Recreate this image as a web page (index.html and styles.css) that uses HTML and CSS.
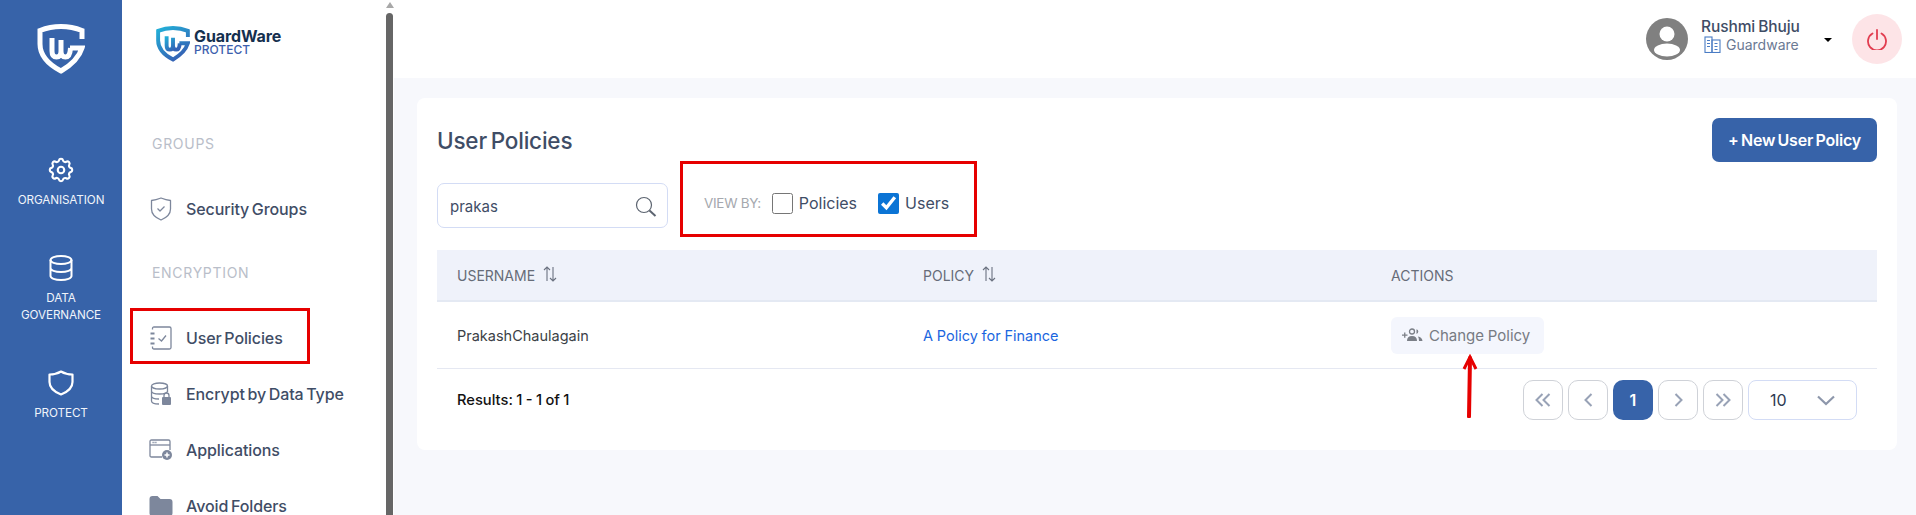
FILE: index.html
```html
<!DOCTYPE html>
<html lang="en">
<head>
<meta charset="utf-8">
<title>User Policies</title>
<link rel="stylesheet" href="styles.css">
</head>
<body>
<svg class="defs" width="0" height="0" aria-hidden="true">
  <defs>
    <linearGradient id="logoGrad" x1="0" y1="0" x2="0.6" y2="1">
      <stop offset="0" stop-color="#22b0d8"/>
      <stop offset="1" stop-color="#3563b5"/>
    </linearGradient>
  </defs>
</svg>
<div class="app">
  <nav class="rail">
    <div class="rail-logo">
      <svg width="48" height="50" viewBox="0 0 48 50" fill="none" stroke="#fff" stroke-width="5">
        <path d="M45 15V6.5Q35 2.5 24 2.5Q13 2.500 3 6.500V20Q3 36 24 47Q41 37 45 24H33"/>
        <path d="M15 14V27Q15 33 19.500 33Q24 33 24 27V16M24 27Q24 33 28.500 33Q33 33 33.500 24"/>
      </svg>
    </div>
    <a class="rail-item rail-org">
      <svg width="30" height="30" viewBox="0 0 24 24" fill="none" stroke="#fff" stroke-width="1.700" stroke-linejoin="round"><path d="M10.325 4.317c.426-1.756 2.924-1.756 3.35 0a1.724 1.724 0 002.573 1.066c1.543-.94 3.31.826 2.37 2.37a1.724 1.724 0 001.065 2.572c1.756.426 1.756 2.924 0 3.35a1.724 1.724 0 00-1.066 2.573c.94 1.543-.826 3.31-2.37 2.37a1.724 1.724 0 00-2.572 1.065c-.426 1.756-2.924 1.756-3.35 0a1.724 1.724 0 00-2.573-1.066c-1.543.94-3.31-.826-2.37-2.37a1.724 1.724 0 00-1.065-2.572c-1.756-.426-1.756-2.924 0-3.35a1.724 1.724 0 001.066-2.573c-.94-1.543.826-3.31 2.37-2.37.996.608 2.296.07 2.572-1.065z"/><circle cx="12" cy="12" r="2.600"/></svg>
      <span>ORGANISATION</span>
    </a>
    <a class="rail-item rail-data">
      <svg width="24" height="26" viewBox="0 0 24 26" fill="none" stroke="#fff" stroke-width="2"><ellipse cx="12" cy="5" rx="10.500" ry="4"/><path d="M1.500 5V21C1.500 23.200 6 25 12 25S22.500 23.200 22.500 21V5M1.500 13C1.500 15.200 6 17 12 17S22.500 15.200 22.500 13"/></svg>
      <span>DATA<br>GOVERNANCE</span>
    </a>
    <a class="rail-item rail-protect">
      <svg width="26" height="26" viewBox="0 0 26 26" fill="none" stroke="#fff" stroke-width="2.200" stroke-linejoin="round"><path d="M13 1.500Q18 4.500 24.500 4.500V12Q24.500 20 13 24.500Q1.500 20 1.500 12V4.500Q8 4.500 13 1.500Z"/></svg>
      <span>PROTECT</span>
    </a>
  </nav>

  <aside class="sidebar">
    <div class="side-content">
      <div class="brand">
        <svg width="34" height="36" viewBox="0 0 48 50" fill="none" stroke="url(#logoGrad)" stroke-width="5.500">
          <path d="M45 15V6.500Q35 2.500 24 2.500Q13 2.500 3 6.500V20Q3 36 24 47Q41 37 45 24H33"/>
          <path d="M15 14V27Q15 33 19.500 33Q24 33 24 27V16M24 27Q24 33 28.500 33Q33 33 33.500 24"/>
        </svg>
        <div class="brand-text">
          <div class="brand-name">GuardWare</div>
          <div class="brand-sub">PROTECT</div>
        </div>
      </div>
      <div class="side-heading side-heading-first">GROUPS</div>
      <a class="side-item">
        <svg class="side-icon" width="22" height="24" viewBox="0 0 22 24" fill="none" stroke="#7d879c" stroke-width="1.300" stroke-linejoin="round"><path d="M11 1Q16 3 20.500 3.500V12Q20.500 19 11 23Q1.500 19 1.500 12V3.500Q6 3 11 1Z"/><path d="M7.500 11.500L10 14L14.500 9.500"/></svg>
        <span>Security Groups</span>
      </a>
      <div class="side-heading side-heading-enc">ENCRYPTION</div>
      <a class="side-item">
        <svg class="side-icon" width="23" height="24" viewBox="0 0 23 24" fill="none" stroke="#7d879c" stroke-width="1.300"><path d="M3 3.500V2.500Q3 1 4.500 1H20Q21.500 1 21.500 2.500V21.500Q21.500 23 20 23H4.500Q3 23 3 21.500V20.500"/><path d="M9 12.500L12 15L16.500 9.500"/><path d="M1 7.500H5M1 12.500H5M1 17.500H5" stroke-width="2"/></svg>
        <span>User Policies</span>
      </a>
      <a class="side-item">
        <svg class="side-icon" width="22" height="24" viewBox="0 0 22 24" fill="none" stroke="#7d879c" stroke-width="1.300"><ellipse cx="9.500" cy="4" rx="8" ry="3"/><path d="M1.500 4V19C1.500 20.700 4.500 22 9 22M17.500 4V10M1.500 9C1.500 10.700 5 12 9.500 12S17.500 10.700 17.500 9M1.500 14C1.500 15.700 4.500 17 9 17"/><rect x="12" y="15" width="9" height="8" rx="1" fill="#7d879c" stroke="none"/><path d="M14 15.500V13.500A2.500 2.500 0 0119 13.500V15.500"/></svg>
        <span>Encrypt by Data Type</span>
      </a>
      <a class="side-item">
        <svg class="side-icon" width="24" height="22" viewBox="0 0 24 22" fill="none" stroke="#7d879c" stroke-width="1.300"><path d="M13 18H2.500Q1 18 1 16.500V2.500Q1 1 2.500 1H19.500Q21 1 21 2.500V11"/><path d="M1 6H21"/><path d="M3.500 3.500H8" stroke-dasharray="1.200 .8"/><circle cx="18" cy="16" r="5" fill="#7d879c" stroke="none"/><path d="M18 13.500V18.500M15.500 16H20.500" stroke="#fff" stroke-width="1.500"/></svg>
        <span>Applications</span>
      </a>
      <a class="side-item">
        <svg class="side-icon" width="23" height="20" viewBox="0 0 23 20" fill="#7d879c"><path d="M0 3Q0 0 3 0H8L11 3H20Q23 3 23 6V17Q23 20 20 20H3Q0 20 0 17Z"/></svg>
        <span>Avoid Folders</span>
      </a>
    </div>
    <div class="scrollbar">
      <span class="scroll-arrow"></span>
      <span class="scroll-thumb"></span>
    </div>
  </aside>

  <div class="main">
    <header class="topbar">
      <svg class="avatar" width="42" height="42" viewBox="0 0 42 42"><circle cx="21" cy="21" r="21" fill="#808080"/><circle cx="21" cy="16" r="7.500" fill="#fff"/><ellipse cx="21" cy="32" rx="13" ry="6.500" fill="#fff"/></svg>
      <div class="user">
        <div class="user-name">Rushmi Bhuju</div>
        <div class="user-org">
          <svg width="17" height="17" viewBox="0 0 17 17" fill="none" stroke="#4a7cc4" stroke-width="1.100"><rect x="1" y="1" width="7" height="15.500"/><rect x="8" y="4" width="8" height="12.500"/><path d="M3 4.500H6M3 7.500H6M3 10.500H6M10.500 7.500H13.500M10.500 10.500H13.500M10.500 13.500H13.500"/></svg>
          <span>Guardware</span>
        </div>
      </div>
      <span class="caret"></span>
      <button class="power" type="button" aria-label="Log out">
        <svg width="20" height="21" viewBox="0 0 20 21" fill="none" stroke="#e23d50" stroke-width="1.800" stroke-linecap="round"><path d="M10 1V10"/><path d="M5.500 4.500A9 9 0 1014.500 4.500"/></svg>
      </button>
    </header>

    <section class="content">
      <div class="card">
        <div class="card-head">
          <h1>User Policies</h1>
          <button class="primary" type="button">+ New User Policy</button>
        </div>
        <div class="toolbar">
          <div class="search">
            <span>prakas</span>
            <svg width="22" height="22" viewBox="0 0 22 22" fill="none" stroke="#5c6470" stroke-width="1.200"><circle cx="9" cy="9" r="7.500"/><path d="M14.500 14.500L20.500 20" stroke-width="2"/></svg>
          </div>
          <div class="viewby">
            <span class="viewby-label">VIEW BY:</span>
            <label class="check"><input type="checkbox"><span>Policies</span></label>
            <label class="check"><input type="checkbox" checked><span>Users</span></label>
          </div>
        </div>
        <div class="table">
          <div class="row row-head">
            <div class="cell">USERNAME <svg class="sort" width="14" height="16" viewBox="0 0 14 16" fill="none" stroke="#6b7280" stroke-width="1.100"><path d="M4 15V1M1 4L4 1L7 4M10 1V15M7 12L10 15L13 12"/></svg></div>
            <div class="cell">POLICY <svg class="sort" width="14" height="16" viewBox="0 0 14 16" fill="none" stroke="#6b7280" stroke-width="1.100"><path d="M4 15V1M1 4L4 1L7 4M10 1V15M7 12L10 15L13 12"/></svg></div>
            <div class="cell">ACTIONS</div>
          </div>
          <div class="row row-body">
            <div class="cell">PrakashChaulagain</div>
            <div class="cell"><a class="link">A Policy for Finance</a></div>
            <div class="cell">
              <button class="change" type="button">
                <svg width="21" height="14" viewBox="0 0 21 14" fill="#7b7f87"><path d="M0 6.500H5.500V7.800H0ZM2.100 4.500H3.400V9.800H2.100Z"/><circle cx="10" cy="3.500" r="2.500" fill="none" stroke="#7b7f87" stroke-width="1.300"/><path d="M5 13Q5 8 10 8T15 13Z"/><path d="M14.500 1.200A2.500 2.500 0 0114.500 6ZM16 8.500Q20 9 20.500 13H17Q17 10 16 8.500Z"/></svg>
                <span>Change Policy</span>
              </button>
            </div>
          </div>
        </div>
        <div class="foot">
          <div class="results">Results: 1 - 1 of 1</div>
          <div class="pager">
            <button class="page" type="button" aria-label="First"><svg width="16" height="14" viewBox="0 0 16 14" fill="none" stroke="#98a2b6" stroke-width="2"><path d="M7.500 1L1.500 7L7.500 13M14.500 1L8.500 7L14.500 13"/></svg></button>
            <button class="page" type="button" aria-label="Previous"><svg width="9" height="14" viewBox="0 0 9 14" fill="none" stroke="#98a2b6" stroke-width="2"><path d="M7.500 1L1.500 7L7.500 13"/></svg></button>
            <button class="page page-on" type="button">1</button>
            <button class="page" type="button" aria-label="Next"><svg width="9" height="14" viewBox="0 0 9 14" fill="none" stroke="#98a2b6" stroke-width="2"><path d="M1.500 1L7.500 7L1.500 13"/></svg></button>
            <button class="page" type="button" aria-label="Last"><svg width="16" height="14" viewBox="0 0 16 14" fill="none" stroke="#98a2b6" stroke-width="2"><path d="M1.500 1L7.500 7L1.500 13M8.500 1L14.500 7L8.500 13"/></svg></button>
            <div class="size">
              <span>10</span>
              <svg width="18" height="11" viewBox="0 0 18 11" fill="none" stroke="#8d97ab" stroke-width="2.200"><path d="M1 1.500L9 9L17 1.500"/></svg>
            </div>
          </div>
        </div>
      </div>
    </section>
  </div>

  <div class="mark-policies"></div>
  <svg class="mark-arrow" width="16" height="64" viewBox="0 0 16 64" fill="none" stroke="#e60000"><path d="M7 62.500L8 4" stroke-width="4" stroke-linecap="round"/><path d="M2 15L8 3L14 15" stroke-width="3"/></svg>
</div>
</body>
</html>
```
FILE: styles.css
```css
* { box-sizing: border-box; }
html, body { margin: 0; height: 100%; overflow: hidden; }
body { font-family: Inter, "Noto Sans", "Liberation Sans", sans-serif; color: #3d4a63; background: #fff; }
.defs { display: block; height: 0; }
button { font-family: inherit; cursor: pointer; }
h1 { margin: 0; }

.app { position: relative; display: flex; height: 515px; overflow: hidden; }

/* left rail */
.rail { flex: 0 0 122px; background: #3763a9; color: #f0f4fa; display: flex; flex-direction: column; align-items: center; }
.rail-logo { height: 155px; padding-top: 24px; }
.rail-item { display: flex; flex-direction: column; align-items: center; text-align: center; font-size: 11.700px; line-height: 17px; font-weight: 400; letter-spacing: -.1px; }
.rail-org { height: 100px; gap: 7px; }
.rail-data { height: 115px; gap: 9px; }
.rail-protect { gap: 9px; }

/* secondary sidebar */
.sidebar { flex: 0 0 272px; display: flex; background: #fff; }
.side-content { flex: 1; padding: 26px 0 0 27px; overflow: hidden; }
.brand { display: flex; align-items: flex-start; gap: 4px; padding-left: 7px; height: 36px; }
.brand-text { padding-top: 3px; }
.brand-name { font-size: 16px; line-height: 15px; font-weight: 700; color: #15304f; letter-spacing: -.1px; }
.brand-sub { font-size: 12px; line-height: 12px; font-weight: 500; color: #3d5fae; letter-spacing: 0; }
.side-heading { font-size: 14px; line-height: 18px; color: #b9bec9; padding-left: 3px; letter-spacing: .7px; font-weight: 400; }
.side-heading-first { margin-top: 73px; }
.side-heading-enc { margin-top: 27px; }
.side-item { display: flex; align-items: center; height: 56px; font-size: 16px; font-weight: 500; color: #3f4d66; letter-spacing: -.1px; word-spacing: -1.500px; }
.side-heading + .side-item { margin-top: 28px; }
.side-icon { flex: 0 0 24px; margin-right: 13px; }

.scrollbar { flex: 0 0 14px; padding-left: 6px; display: flex; flex-direction: column; }
.scroll-arrow { width: 0; height: 0; margin: 2px 0 0; border-left: 4px solid transparent; border-right: 4px solid transparent; border-bottom: 6px solid #a8a8a8; }
.scroll-thumb { flex: 1; width: 7px; margin-top: 5px; background: #666; border-radius: 4px 4px 0 0; }

/* main */
.main { flex: 1; min-width: 0; display: flex; flex-direction: column; background: #f7f8fc; }
.topbar { height: 78px; flex: none; background: #fff; display: flex; align-items: center; padding: 0 14px 0 0; justify-content: flex-end; }
.avatar { margin-right: 13px; }
.user { width: 123px; padding-bottom: 8px; }
.user-name { font-size: 15.500px; line-height: 19px; font-weight: 500; color: #3f4d66; letter-spacing: -.1px; word-spacing: -1px; }
.user-org { display: flex; align-items: center; gap: 5px; padding-left: 3px; font-size: 14px; line-height: 17px; color: #6b7a94; }
.caret { width: 0; height: 0; margin: 2px 20px 0 0; border-left: 4px solid transparent; border-right: 4px solid transparent; border-top: 4px solid #000; }
.power { width: 50px; height: 50px; border: 0; border-radius: 50%; background: #fde4e7; display: flex; align-items: center; justify-content: center; padding: 0; }

.content { flex: 1; padding: 20px 19px 0 23px; }
.card { background: #fff; border-radius: 8px; height: 352px; padding: 20px 20px 0; }
.card-head { display: flex; justify-content: space-between; align-items: center; height: 44px; }
h1 { font-size: 22.500px; line-height: 46px; padding-top: 2px; font-weight: 500; color: #3f4d66; letter-spacing: -.2px; word-spacing: -2px; }
.primary { height: 44px; width: 165px; border: 0; border-radius: 7px; background: #3763a9; color: #fff; font-size: 16px; font-weight: 600; letter-spacing: -.2px; word-spacing: -1.500px; padding: 0; }

.toolbar { display: flex; align-items: flex-start; gap: 12px; margin-top: -1px; height: 89px; }
.search { width: 231px; height: 45px; margin-top: 22px; border: 1px solid #d3dcf5; border-radius: 7px; display: flex; align-items: center; justify-content: space-between; padding: 2px 10px 0 12px; font-size: 15px; line-height: 17px; color: #3f4d66; }
.viewby { width: 297px; height: 76px; border: 3px solid #e60000; display: flex; align-items: center; padding: 8px 0 0 21px; }
.viewby-label { font-size: 13.500px; color: #a5a8ae; letter-spacing: -.3px; margin-right: 11px; }
.check { display: flex; align-items: center; font-size: 16px; font-weight: 400; color: #3f4d66; margin-right: 21px; }
.check input { width: 21px; height: 21px; margin: 0 6px 0 0; accent-color: #0b74d5; }

.table { width: 100%; }
.row { display: grid; grid-template-columns: 466px 468px 506px; align-items: center; }
.cell { padding-left: 20px; }
.row-head { height: 52px; background: #eff2fa; border-bottom: 2px solid #e4e9f3; font-size: 14px; color: #666c78; font-weight: 400; }
.sort { margin-left: 4px; vertical-align: -1px; }
.row-body { height: 67px; border-bottom: 1px solid #e5e8f2; font-size: 14.500px; color: #3b3f46; }
.link { color: #1a66e0; font-weight: 400; word-spacing: -.3px; }
.change { display: flex; align-items: center; gap: 6px; height: 37px; width: 153px; padding: 0 0 0 11px; border: 0; border-radius: 6px; background: #f4f6fd; font-size: 15px; color: #777b83; word-spacing: -.5px; }

.foot { display: flex; justify-content: space-between; align-items: center; height: 51px; padding-left: 20px; padding-top: 11px; }
.results { font-size: 14.700px; font-weight: 500; color: #111; word-spacing: -.5px; }
.pager { display: flex; gap: 5px; }
.page { width: 40px; height: 40px; border: 1px solid #cfd2d8; border-radius: 10px; background: #fff; padding: 0; display: flex; align-items: center; justify-content: center; }
.page-on { border: 0; background: #3763a9; color: #fff; font-size: 16px; font-weight: 600; }
.size { width: 109px; height: 40px; margin-right: 20px; border: 1px solid #d3dcf5; border-radius: 8px; display: flex; align-items: center; justify-content: space-between; padding: 0 21px; font-size: 16px; color: #2d3a52; }

/* annotations drawn over the screenshot */
.mark-policies { position: absolute; left: 130px; top: 308px; width: 180px; height: 56px; border: 3px solid #e60000; }
.mark-arrow { position: absolute; left: 1462px; top: 354px; }
```
